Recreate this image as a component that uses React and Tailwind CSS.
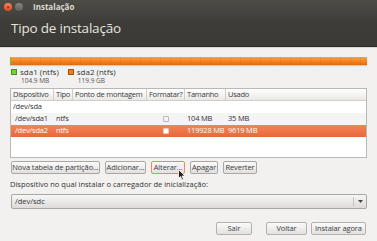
import React from "react";

const font = { fontFamily: '"Open Sans", "Noto Sans", sans-serif' };

const Btn = ({ children, className = "" }) => (
  <div
    className={`h-[13px] flex items-center justify-center whitespace-nowrap overflow-hidden rounded-[2px] border text-[7.5px] leading-none tracking-[-0.1px] text-[#3c3c3c] bg-gradient-to-b from-[#fafafa] to-[#e2e1df] ${className}`}
  >
    {children}
  </div>
);

const Check = ({ white }) => (
  <div
    className={`w-[6px] h-[6px] rounded-[1px] border ${
      white ? "bg-white border-[#f6c8b0]" : "bg-[#f4f4f4] border-[#b8b8b8]"
    }`}
  />
);

const cols = ["w-[43px]", "w-[19px]", "w-[74px]", "w-[38px]", "w-[41px]", "flex-1"];

const Row = ({ cells, className = "", text = "text-[#333]" }) => (
  <div className={`flex h-[12px] items-center text-[7.5px] leading-none tracking-[-0.2px] whitespace-nowrap ${text} ${className}`}>
    {cells.map((c, i) => (
      <div
        key={i}
        className={`${cols[i]} flex items-center overflow-visible ${i === 3 ? "justify-center" : "pl-[2px]"}`}
      >
        {c}
      </div>
    ))}
  </div>
);

export default function App() {
  const headers = ["Dispositivo", "Tipo", "Ponto de montagem", "Formatar?", "Tamanho", "Usado"];
  return (
    <div className="w-[377px] h-[241px] bg-[#f2f1f0] overflow-hidden relative" style={font}>
      {/* header */}
      <div className="h-[47px] bg-gradient-to-b from-[#4d4c47] via-[#3d3c38] to-[#3c3b37] border-b border-[#2b2a27]">
        <div className="h-[13px] flex items-center pl-[4px]">
          <div className="w-[8px] h-[8px] rounded-full bg-gradient-to-b from-[#f7845b] to-[#d9471b] flex items-center justify-center text-[6px] leading-none text-[#3c3b37] font-bold">
            ×
          </div>
          <div className="w-[8px] h-[8px] rounded-full bg-gradient-to-b from-[#8a8984] to-[#5e5d59] ml-[3px]" />
          <div className="ml-[10px] text-[8px] font-bold text-[#dfdbd2] leading-none">Instalação</div>
        </div>
        <div className="pl-[11px] pt-[9px] text-[13.5px] leading-none text-[#e6e4df] tracking-[-0.2px]">
          Tipo de instalação
        </div>
      </div>
      <div className="h-px bg-[#d8d7d5]" />

      <div className="px-[10px]">
        {/* partition bar */}
        <div className="mt-[9px] h-[8px] flex w-[357px] shadow-[0_1px_1px_rgba(0,0,0,0.15)]">
          <div className="w-[1px] bg-[#6ac239]" />
          <div
            className="flex-1"
            style={{
              backgroundImage:
                "repeating-linear-gradient(90deg, rgba(0,0,0,0) 0px, rgba(0,0,0,0) 9px, rgba(150,70,0,0.09) 9px, rgba(150,70,0,0.09) 10px), linear-gradient(#f7a049, #ef8424 55%, #dc6c14)",
            }}
          />
        </div>

        {/* legend */}
        <div className="mt-[3px] flex pl-[1px] h-[16px] whitespace-nowrap">
          <div className="flex">
            <div className="w-[6px] h-[6px] mt-[1px] bg-[#7ad03a] border border-[#4c8d24]" />
            <div className="ml-[3px]">
              <div className="text-[8px] leading-[8px] text-[#333]">sda1 (ntfs)</div>
              <div className="text-[6.5px] leading-[7px] text-[#555] mt-[1px] pl-px">104.9 MB</div>
            </div>
          </div>
          <div className="flex ml-[9px]">
            <div className="w-[6px] h-[6px] mt-[1px] bg-[#f07c16] border border-[#a9520b]" />
            <div className="ml-[3px]">
              <div className="text-[8px] leading-[8px] text-[#333]">sda2 (ntfs)</div>
              <div className="text-[6.5px] leading-[7px] text-[#555] mt-[1px] pl-px">119.9 GB</div>
            </div>
          </div>
        </div>

        {/* table */}
        <div className="mt-[4px] h-[70px] border border-[#b9b8b6] bg-white">
          <div className="flex h-[12px] bg-gradient-to-b from-[#ffffff] to-[#e9e8e6] border-b border-[#cfcecc] text-[7.5px] leading-none tracking-[-0.25px] text-[#3c3c3c] whitespace-nowrap">
            {headers.map((h, i) => (
              <div
                key={h}
                className={`${cols[i]} flex items-center pl-[2px] overflow-hidden ${i < 5 ? "border-r border-[#cfcecc]" : ""}`}
              >
                {h}
              </div>
            ))}
          </div>
          <Row cells={["/dev/sda", "", "", "", "", ""]} />
          <Row
            className="bg-[#f4f4f3]"
            cells={[<span className="pl-[2px]">/dev/sda1</span>, "ntfs", "", <Check />, "104 MB", "35 MB"]}
          />
          <Row
            className="bg-gradient-to-b from-[#f28458] to-[#e9683b]"
            text="text-white"
            cells={[<span className="pl-[2px]">/dev/sda2</span>, "ntfs", "", <Check white />, "119928 MB", "9619 MB"]}
          />
        </div>

        {/* buttons */}
        <div className="mt-[3px] flex pl-[1px] gap-[5px]">
          <Btn className="w-[89px] border-[#a8a7a5]">Nova tabela de partição...</Btn>
          <Btn className="w-[41px] border-[#a8a7a5]">Adicionar...</Btn>
          <Btn className="w-[34px] border-[#e98a62]">Alterar...</Btn>
          <Btn className="w-[28px] border-[#a8a7a5]">Apagar</Btn>
          <Btn className="w-[34px] border-[#a8a7a5]">Reverter</Btn>
        </div>

        <div className="mt-[6px] text-[7.5px] leading-[9px] text-[#333] whitespace-nowrap">
          Dispositivo no qual instalar o carregador de inicialização:
        </div>

        <div className="mt-[5px] ml-[1px] h-[15px] w-[356px] flex items-center rounded-[2px] border border-[#a8a7a5] bg-gradient-to-b from-[#f7f7f7] to-[#dcdbd9]">
          <div className="flex-1 pl-[3px] text-[7.5px] leading-none text-[#333]">/dev/sdc</div>
          <div className="w-px h-[9px] bg-[#c4c3c1]" />
          <div className="w-[12px] flex justify-center">
            <svg width="5" height="3" viewBox="0 0 5 3">
              <path d="M0 0 L5 0 L2.5 3 Z" fill="#444" />
            </svg>
          </div>
        </div>

        <div className="mt-[13px] flex justify-end gap-[4px] pr-px">
          <Btn className="w-[36px] border-[#b2b1af] text-[#444]">Sair</Btn>
          <div className="w-[6px]" />
          <Btn className="w-[41px] border-[#b2b1af]">Voltar</Btn>
          <Btn className="w-[55px] border-[#b2b1af]">Instalar agora</Btn>
        </div>
      </div>

      {/* mouse pointer */}
      <svg className="absolute left-[178px] top-[169px]" width="8" height="12" viewBox="0 0 8 12">
        <path d="M0.5 0.5 L0.5 9.5 L2.5 7.5 L4 11 L5.5 10.3 L4 7 L7 7 Z" fill="#222" stroke="#fff" strokeWidth="0.8" />
      </svg>
    </div>
  );
}
